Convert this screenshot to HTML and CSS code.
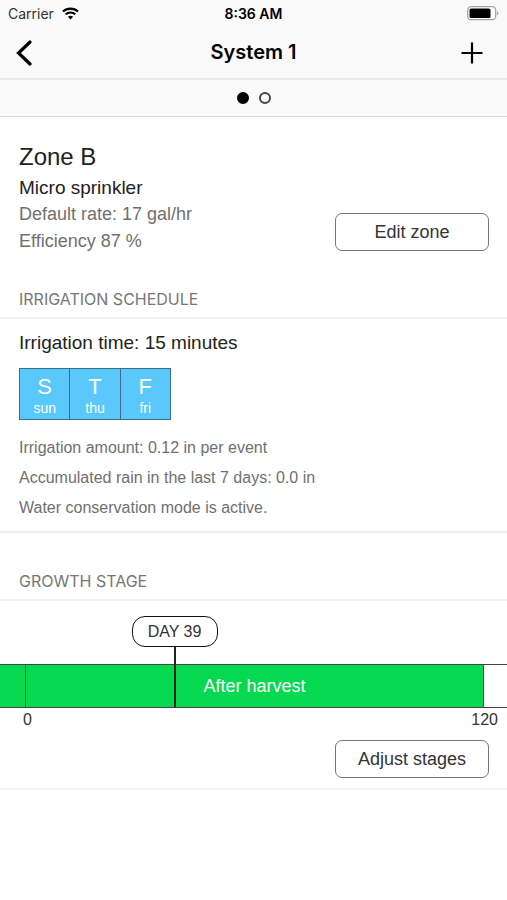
FILE: index.html
```html
<!DOCTYPE html>
<html lang="en">
<head>
<meta charset="utf-8">
<meta name="viewport" content="width=device-width, initial-scale=1">
<title>System 1</title>
<link rel="stylesheet" href="styles.css">
</head>
<body>
<header class="top">
  <div class="status">
    <div class="carrier">
      <span>Carrier</span>
      <svg width="17" height="13" viewBox="0 0 17 13" fill="none" stroke="#000" stroke-width="2.1" aria-hidden="true">
        <path d="M1 4.5C5.200.6 11.800.6 16 4.500"/>
        <path d="M3.700 7.300C6.400 4.900 10.600 4.900 13.300 7.300"/>
        <path d="M8.500 12.400L5.900 9.700C7.300 8.400 9.700 8.400 11.100 9.700Z" fill="#000" stroke="none"/>
      </svg>
    </div>
    <span class="clock">8:36 AM</span>
    <svg class="battery" width="32" height="15" viewBox="0 0 32 15" aria-hidden="true">
      <rect x=".7" y=".7" width="28" height="13" rx="3.500" fill="#fff" stroke="#a3a3a3" stroke-width="1.300"/>
      <rect x="2.500" y="2.500" width="21" height="9.500" rx="1.500" fill="#000"/>
      <path d="M30 5.200C31.800 6 31.800 8.400 30 9.200Z" fill="#a3a3a3"/>
    </svg>
  </div>
  <nav class="nav">
    <button class="icon-button" type="button" aria-label="Back">
      <svg width="16" height="26" viewBox="0 0 16 26" fill="none" stroke="#000" stroke-width="3.200" stroke-linecap="round"><path d="M14 2L2.500 13L14 24"/></svg>
    </button>
    <h1>System 1</h1>
    <button class="icon-button add" type="button" aria-label="Add">
      <svg width="22" height="22" viewBox="0 0 22 22" stroke="#000" stroke-width="2.200"><path d="M11 .5V21.500M.5 11H21.500"/></svg>
    </button>
  </nav>
</header>
<div class="pager">
  <span class="dot current"></span>
  <span class="dot"></span>
</div>
<main>
  <section class="zone">
    <div>
      <h2>Zone B</h2>
      <p class="kind">Micro sprinkler</p>
      <p>Default rate: 17 gal/hr</p>
      <p>Efficiency 87 %</p>
    </div>
    <button class="button" type="button">Edit zone</button>
  </section>

  <h3>IRRIGATION SCHEDULE</h3>
  <section class="schedule">
    <p class="time">Irrigation time: 15 minutes</p>
    <ul class="days">
      <li><b>S</b><span>sun</span></li>
      <li><b>T</b><span>thu</span></li>
      <li><b>F</b><span>fri</span></li>
    </ul>
    <p class="note">Irrigation amount: 0.12 in per event</p>
    <p class="note">Accumulated rain in the last 7 days: 0.0 in</p>
    <p class="note">Water conservation mode is active.</p>
  </section>

  <h3 class="growth-title">GROWTH STAGE</h3>
  <section class="growth">
    <div class="timeline">
      <div class="before"></div>
      <div class="stage">After harvest
        <div class="marker" style="left: 32.5%"><span>DAY 39</span></div>
      </div>
      <div class="after"></div>
    </div>
    <div class="scale"><span>0</span><span>120</span></div>
    <button class="button" type="button">Adjust stages</button>
  </section>
</main>
</body>
</html>
```
FILE: styles.css
```css
* {
  box-sizing: border-box;
}

body {
  margin: 0;
  background: #fff;
  color: #222;
  font-family: "Liberation Sans", Arial, sans-serif;
  font-size: 18px;
  line-height: 27px;
}

h1, h2, h3, p, ul {
  margin: 0;
  padding: 0;
  font-weight: 400;
}

button {
  font: inherit;
  color: inherit;
  cursor: pointer;
}

svg {
  display: block;
}

.top {
  background: #f9f9f9;
  border-bottom: 2px solid #e8e8e8;
  font-family: Inter, sans-serif;
  color: #000;
}

.status {
  display: grid;
  grid-template-columns: 1fr auto 1fr;
  align-items: center;
  height: 27px;
  padding: 0 8px;
  font-size: 14px;
}

.carrier {
  display: flex;
  align-items: center;
  gap: 8px;
  color: #333;
}

.clock {
  font-weight: 600;
}

.battery {
  justify-self: end;
}

.nav {
  display: grid;
  grid-template-columns: 1fr auto 1fr;
  align-items: center;
  height: 51px;
  padding: 0 16px;
}

.nav h1 {
  font-size: 20px;
  font-weight: 600;
}

.icon-button {
  justify-self: start;
  padding: 0;
  border: 0;
  background: none;
}

.add {
  justify-self: end;
  margin-right: 8px;
}

.pager {
  display: flex;
  align-items: center;
  justify-content: center;
  gap: 10px;
  height: 37px;
  background: #f9f9f9;
  border-bottom: 1px solid #dcdcdc;
}

.dot {
  width: 12px;
  height: 12px;
  border: 2px solid #444;
  border-radius: 50%;
}

.current {
  background: #000;
  border-color: #000;
}

.zone {
  display: flex;
  align-items: flex-end;
  justify-content: space-between;
  padding: 22px 18px 0 19px;
  color: #707070;
}

.zone h2 {
  font-size: 24px;
  line-height: 35px;
  color: #222;
}

.zone .kind {
  color: #222;
  font-size: 19px;
}

.button {
  width: 154px;
  height: 38px;
  padding: 0;
  border: 1px solid #777;
  border-radius: 7px;
  background: #fff;
  color: #333;
  font-size: 18px;
}

.zone .button {
  margin-bottom: 4px;
}

h3 {
  padding: 31px 19px 4px;
  border-bottom: 2px solid #f2f2f2;
  color: #777;
  font-family: Inter, sans-serif;
  font-size: 16px;
}

.schedule {
  padding: 10px 19px 8px;
  border-bottom: 2px solid #f0f0f0;
}

.time {
  font-size: 19px;
}

.days {
  display: flex;
  width: 152px;
  height: 52px;
  margin: 12px 0 13px;
  border: 1px solid #38708c;
  background: #5ac8fa;
  color: #fff;
  list-style: none;
}

.days li {
  display: flex;
  flex: 1;
  flex-direction: column;
  align-items: center;
  padding-top: 6px;
  font-size: 14px;
  line-height: 18px;
}

.days li + li {
  border-left: 1px solid #38708c;
}

.days b {
  font-size: 22px;
  font-weight: 400;
  line-height: 24px;
}

.note {
  color: #707070;
  font-size: 16px;
  line-height: 30px;
}

.growth-title {
  padding-top: 35px;
}

.growth {
  padding: 63px 0 10px;
  border-bottom: 2px solid #f4f4f4;
}

.timeline {
  display: flex;
  height: 44px;
  border: solid #444;
  border-width: 1px 0;
}

.before,
.stage {
  background: #04d94f;
  border-right: 1px solid #17662f;
}

.before {
  flex: 0 0 26px;
}

.stage {
  position: relative;
  flex: 1;
  color: #fff;
  line-height: 42px;
  text-align: center;
}

.after {
  flex: 0 0 23px;
}

.marker {
  position: absolute;
  bottom: 0;
  display: flex;
  flex-direction: column;
  align-items: center;
  height: 91px;
  transform: translateX(-50%);
}

.marker::after {
  flex: 1;
  width: 2px;
  background: #222;
  content: "";
}

.marker span {
  width: 86px;
  height: 31px;
  border: 1px solid #111;
  border-radius: 13px;
  background: #fff;
  color: #333;
  font-size: 16px;
  line-height: 29px;
}

.scale {
  display: flex;
  justify-content: space-between;
  padding: 0 9px 0 23px;
  color: #333;
  font-size: 16px;
  line-height: 24px;
}

.growth .button {
  display: block;
  margin: 8px 18px 0 auto;
}
```
